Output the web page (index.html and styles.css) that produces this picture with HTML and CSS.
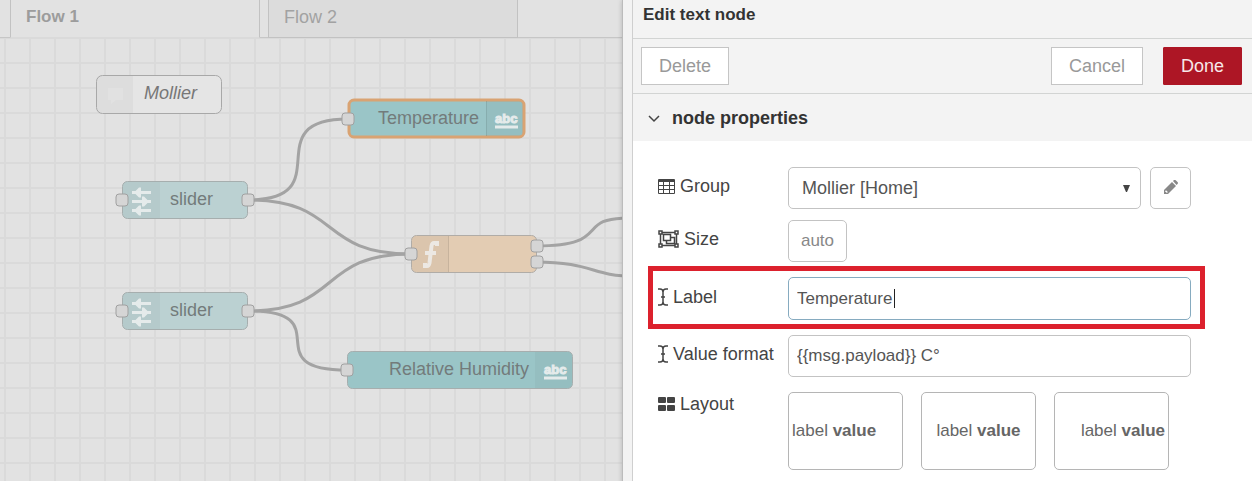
FILE: index.html
```
<!DOCTYPE html>
<html lang="en">
  <head>
    <meta charset="UTF-8" />
    <meta name="viewport" content="width=device-width, initial-scale=1" />
    <title>Node-RED</title>
    <link rel="stylesheet" href="styles.css">
  </head>
  <body>
    <div class="workspace">
      <main class="editor">
        <nav class="tabs">
          <a class="tab active" href="#flow1">Flow 1</a>
          <a class="tab" href="#flow2">Flow 2</a>
        </nav>
        <svg class="canvas" role="img" aria-label="Flow 1">
          <defs>
            <pattern id="grid" x="4" y="1" width="25" height="25" patternUnits="userSpaceOnUse">
              <path class="grid-line" d="M1 0V25M0 24H25" />
            </pattern>
            <g id="port"><rect class="port" x="-6" y="-6" width="12" height="12" rx="3" /></g>
            <g id="sliderIcon">
              <path class="icon-line" d="M10 11.500H29M10 20.500H29M10 29.500H29" />
              <path class="icon-fill" d="M12 11.500l5-5h2v10h-2zM27 20.500l-5-5h-2v10h2zM12 29.500l5-5h2v10h-2z" />
            </g>
          </defs>
          <rect width="100%" height="100%" fill="url(#grid)" />

          <!-- wires -->
          <path class="wire" d="M248 162C342 162 254 81 348 81" />
          <path class="wire" d="M248 162C342 162 317 216 411 216" />
          <path class="wire" d="M248 273C342 273 317 216 411 216" />
          <path class="wire" d="M248 273C342 273 253 332 347 332" />
          <path class="wire" d="M536 208C613 208 574 180 628 180" />
          <path class="wire" d="M536 224C590 224 594 238 630 238" />

          <!-- nodes -->
          <g transform="translate(96 37)">
            <rect class="node comment" x="0.5" y="0.5" width="125" height="38" rx="6" />
            <path class="shade" d="M6 1H37V38H6Q1 38 1 33V6Q1 1 6 1Z" />
            <path class="ghost" d="M12 13H27V25H20L15 29V25H12Z" />
            <text class="node-label italic" x="48" y="24">Mollier</text>
          </g>
          <g transform="translate(348 62)">
            <rect class="node text selected" x="1" y="0" width="175" height="37" rx="5" />
            <path class="shade" d="M139 1H170Q175 1 175 6V31Q175 36 170 36H139Z" />
            <path class="divider" d="M138.500 1V36" />
            <text class="node-label" x="30" y="24">Temperature</text>
            <text class="abc" x="147" y="23">abc</text>
            <path class="icon-line" d="M147 27H170" />
            <use href="#port" x="0" y="19" />
          </g>
          <g transform="translate(122 143)">
            <rect class="node slider" x="0.5" y="0.5" width="125" height="37" rx="5" />
            <path class="shade" d="M6 1H38V37H6Q1 37 1 32V6Q1 1 6 1Z" />
            <use href="#sliderIcon" />
            <text class="node-label" x="48" y="24">slider</text>
            <use href="#port" x="0" y="19" />
            <use href="#port" x="126" y="19" />
          </g>
          <g transform="translate(122 254)">
            <rect class="node slider" x="0.5" y="0.5" width="125" height="37" rx="5" />
            <path class="shade" d="M6 1H38V37H6Q1 37 1 32V6Q1 1 6 1Z" />
            <use href="#sliderIcon" />
            <text class="node-label" x="48" y="24">slider</text>
            <use href="#port" x="0" y="19" />
            <use href="#port" x="126" y="19" />
          </g>
          <g transform="translate(411 197)">
            <rect class="node function" x="0.5" y="0.5" width="125" height="37" rx="5" />
            <path class="shade" d="M6 1H37V37H6Q1 37 1 32V6Q1 1 6 1Z" />
            <path class="divider" d="M37.500 1V37" />
            <path class="icon-stroke" d="M26 11V8H23Q21 8 20.500 11L18.500 28Q18 31 16 31H14V28M14 18H25" />
            <use href="#port" x="0" y="19" />
            <use href="#port" x="126" y="11" />
            <use href="#port" x="126" y="27" />
          </g>
          <g transform="translate(347 313)">
            <rect class="node text" x="0.5" y="0.5" width="225" height="37" rx="5" />
            <path class="shade" d="M188 1H220Q225 1 225 6V32Q225 37 220 37H188Z" />
            <text class="node-label" x="42" y="24">Relative Humidity</text>
            <text class="abc" x="197" y="23">abc</text>
            <path class="icon-line" d="M197 27H220" />
            <use href="#port" x="0" y="19" />
          </g>
        </svg>
      </main>
      <div class="separator"></div>
      <aside class="panel">
        <h2 class="panel-title">Edit text node</h2>
        <div class="toolbar">
          <button class="btn" type="button">Delete</button>
          <button class="btn cancel" type="button">Cancel</button>
          <button class="btn primary" type="button">Done</button>
        </div>
        <button class="section" type="button" aria-expanded="true">
          <svg class="chevron" width="12" height="12" viewBox="0 0 12 12"><path d="M1 4L6 9L11 4" /></svg>
          node properties
        </button>
        <form class="form">
          <div class="row">
            <label for="group">
              <svg width="17" height="15" viewBox="0 0 17 15"><path fill-rule="evenodd" d="M1 0H16Q17 0 17 1V14Q17 15 16 15H1Q0 15 0 14V1Q0 0 1 0ZM1 3V6H5V3ZM6 3V6H11V3ZM12 3V6H16V3ZM1 7V10H5V7ZM6 7V10H11V7ZM12 7V10H16V7ZM1 11V14H5V11ZM6 11V14H11V11ZM12 11V14H16V11Z" /></svg>
              Group
            </label>
            <div class="field">
              <div class="select">
                <select id="group"><option>Mollier [Home]</option></select>
                <svg class="arrow" width="7" height="7" viewBox="0 0 7 7"><path d="M0 0H7L4 7H3Z" /></svg>
              </div>
              <button class="box edit" type="button" aria-label="Edit group">
                <svg width="14" height="14" viewBox="0 0 14 14"><path fill-rule="evenodd" d="M0 14V10L8 2L12 6L4 14ZM1.300 11V12H2.200V12.800H3.200L3.800 12L2 10.200ZM9 1L10 0Q11 -.5 12 .5L13.500 2Q14.500 3 13.500 4L12.500 5Z" /></svg>
              </button>
            </div>
          </div>
          <div class="row">
            <label for="size">
              <svg class="outline" width="21" height="18" viewBox="0 0 21 18"><path d="M4 2.500H17M4 15.500H17M2.500 4V14M18.500 4V14M1 1H4V4H1ZM17 1H20V4H17ZM1 14H4V17H1ZM17 14H20V17H17ZM5.500 4.500H12.500V10.500H5.500ZM12.500 7.500H16.500V13.500H8.500V10.500" /></svg>
              Size
            </label>
            <div class="field">
              <button class="box size" id="size" type="button">auto</button>
            </div>
          </div>
          <div class="row highlight">
            <label for="label">
              <svg class="outline" width="10" height="18" viewBox="0 0 10 18"><path d="M0 1H2Q5 1 5 4V14Q5 17 2 17H0M10 1H8Q5 1 5 4M5 14Q5 17 8 17H10M3 9H7" /></svg>
              Label
            </label>
            <div class="field">
              <input class="focused" id="label" type="text" value="Temperature">
            </div>
          </div>
          <div class="row">
            <label for="format">
              <svg class="outline" width="10" height="18" viewBox="0 0 10 18"><path d="M0 1H2Q5 1 5 4V14Q5 17 2 17H0M10 1H8Q5 1 5 4M5 14Q5 17 8 17H10M3 9H7" /></svg>
              Value format
            </label>
            <div class="field">
              <input id="format" type="text" value="{{msg.payload}} C°">
            </div>
          </div>
          <div class="row layout-row">
            <label for="layout">
              <svg width="17" height="14" viewBox="0 0 17 14"><path d="M1 0H7Q8 0 8 1V5Q8 6 7 6H1Q0 6 0 5V1Q0 0 1 0ZM10 0H16Q17 0 17 1V5Q17 6 16 6H10Q9 6 9 5V1Q9 0 10 0ZM1 8H7Q8 8 8 9V13Q8 14 7 14H1Q0 14 0 13V9Q0 8 1 8ZM10 8H16Q17 8 17 9V13Q17 14 16 14H10Q9 14 9 13V9Q9 8 10 8Z" /></svg>
              Layout
            </label>
            <div class="field layouts">
              <button class="box layout left" id="layout" type="button">label <b>value</b></button>
              <button class="box layout" type="button">label <b>value</b></button>
              <button class="box layout right" type="button">label <b>value</b></button>
            </div>
          </div>
        </form>
      </aside>
    </div>
  </body>
</html>
```
FILE: styles.css
```
*{
    box-sizing: border-box;
    margin: 0;
    padding: 0;
}
:root{
    --line: #d2d4d3;
    --field-height: 42px;
}
body{
    font-family: "Liberation Sans", Arial, sans-serif;
    font-size: 18px;
    line-height: 20px;
    color: #444;
    background-color: #fff;
}
button,
input,
select{
    font: inherit;
    color: inherit;
}
button{
    cursor: pointer;
}
.workspace{
    display: grid;
    grid-template-columns: 1fr 10px minmax(320px, 620px);
    height: 100vh;
    overflow: hidden;
}
/* editor */
.editor{
    display: flex;
    flex-direction: column;
    min-width: 0;
    background-color: #e2e2e2;
}
.tabs{
    display: flex;
    flex: none;
    gap: 8px;
    height: 38px;
    padding-left: 10px;
    box-shadow: inset 0 -1px #c6c6c6;
}
.tab{
    width: 250px;
    padding: 7px 15px;
    border: 1px solid #c2c2c2;
    border-top: none;
    background-color: #dcdcdc;
    color: #a2a2a2;
    text-decoration: none;
}
.tab.active{
    border-bottom-color: #dadada;
    background-color: #e2e2e2;
    color: #9c9c9c;
    font-size: 17px;
    font-weight: bold;
}
.canvas{
    flex: 1;
    width: 100%;
    min-height: 0;
}
.grid-line{
    fill: none;
    stroke: #dadada;
    stroke-width: 2;
}
.wire{
    fill: none;
    stroke: #a3a3a3;
    stroke-width: 3;
}
.node{
    stroke: #a6aeae;
}
.node.comment{
    fill: #e5e5e5;
    stroke: #a8a8a8;
}
.node.slider{
    fill: #bbd1d2;
}
.node.function{
    fill: #e3ccb3;
    stroke: #b0aca7;
}
.node.text{
    fill: #9ac5c7;
}
.node.selected{
    stroke: #d9a373;
    stroke-width: 3;
}
.shade{
    fill: #000;
    fill-opacity: 0.03;
}
.divider{
    stroke: #000;
    stroke-opacity: 0.12;
}
.port{
    fill: #d5d5d5;
    stroke: #a0a0a0;
}
.ghost{
    fill: #e1e1e1;
}
.icon-line{
    stroke: #e5ebeb;
    stroke-width: 3;
}
.icon-fill{
    fill: #e5ebeb;
}
.icon-stroke{
    fill: none;
    stroke: #ece8e3;
    stroke-width: 4;
}
.node-label{
    fill: #737b7b;
    font-size: 18px;
}
.node-label.italic{
    fill: #777;
    font-style: italic;
}
.abc{
    fill: #e5ebeb;
    stroke: #e5ebeb;
    stroke-width: 1;
    font-size: 13px;
    font-weight: bold;
}
.separator{
    border-left: 1px solid #bcbcbc;
    background-color: #f3f3f3;
    box-shadow: 0 0 5px rgba(0, 0, 0, 0.2);
}
/* edit panel */
.panel{
    display: flex;
    flex-direction: column;
    border-left: 1px solid #cfcfcf;
    background-color: #fff;
    z-index: 1;
}
.panel-title{
    padding: 5px 10px 13px;
    border-bottom: 1px solid var(--line);
    background-color: #f3f3f3;
    color: #333;
    font-size: 17px;
    line-height: 20px;
}
.toolbar{
    display: flex;
    align-items: center;
    gap: 20px;
    height: 55px;
    padding: 0 10px 0 8px;
    border-bottom: 1px solid var(--line);
    background-color: #f3f3f3;
}
.btn{
    height: 38px;
    padding: 0 17px;
    border: 1px solid #c5c5c5;
    background-color: #fff;
    color: #999;
}
.btn.cancel{
    margin-left: auto;
}
.btn.primary{
    border-color: #ad1625;
    border-radius: 1px;
    background-color: #ad1625;
    color: #f7e8e9;
}
.section{
    display: flex;
    align-items: center;
    gap: 12px;
    height: 47px;
    padding: 0 15px;
    border: none;
    background-color: #f3f3f3;
    color: #333;
    font-weight: bold;
}
.chevron{
    fill: none;
    stroke: #444;
    stroke-width: 1.5;
}
.form{
    display: flex;
    flex-direction: column;
    padding: 26px 47px 10px 15px;
}
.row{
    display: flex;
    align-items: center;
    margin-bottom: 11px;
    padding: 0 14px 0 10px;
}
.row label{
    display: flex;
    flex: none;
    align-items: center;
    gap: 5px;
    width: 130px;
    padding-bottom: 4px;
    fill: #444;
}
.row .outline{
    fill: none;
    stroke: #444;
    stroke-width: 1.5;
}
.row.highlight{
    margin: -7px 0 6px;
    padding: 6px 9px 4px 5px;
    border: 5px solid #dc212d;
}
.field{
    display: flex;
    flex: 1;
    gap: 9px;
    min-width: 0;
}
.select{
    display: flex;
    flex: 1;
    align-items: center;
    height: var(--field-height);
    padding-right: 10px;
    border: 1px solid #c3c3c3;
    border-radius: 5px;
}
.select select{
    flex: 1;
    height: 100%;
    padding-left: 13px;
    border: none;
    outline: none;
    background: none;
    color: #555;
    appearance: none;
}
.arrow{
    fill: #444;
}
.box{
    height: var(--field-height);
    border: 1px solid #c3c3c3;
    border-radius: 5px;
    background-color: #fff;
    color: #888;
}
.box.edit{
    width: 41px;
    fill: #888;
}
.box.size{
    width: 59px;
    font-size: 17px;
}
.field input{
    width: 100%;
    height: var(--field-height);
    padding: 0 8px;
    border: 1px solid #c3c3c3;
    border-radius: 5px;
    outline: none;
    color: #555;
    font-size: 17px;
}
/* text cursor at the end of the value */
.field input.focused{
    height: 43px;
    border-color: #86abc0;
    background: linear-gradient(#222, #222) 105px 11px / 1px 19px no-repeat;
}
.layout-row{
    align-items: flex-start;
    margin-top: 4px;
}
.layout-row label{
    padding-top: 2px;
}
.field.layouts{
    gap: 18px;
}
.box.layout{
    width: 115px;
    height: 78px;
    padding: 0 3px;
    border-color: #b5b5b5;
    color: #666;
    font-size: 17px;
}
.box.left{
    text-align: left;
}
.box.right{
    text-align: right;
}
```
